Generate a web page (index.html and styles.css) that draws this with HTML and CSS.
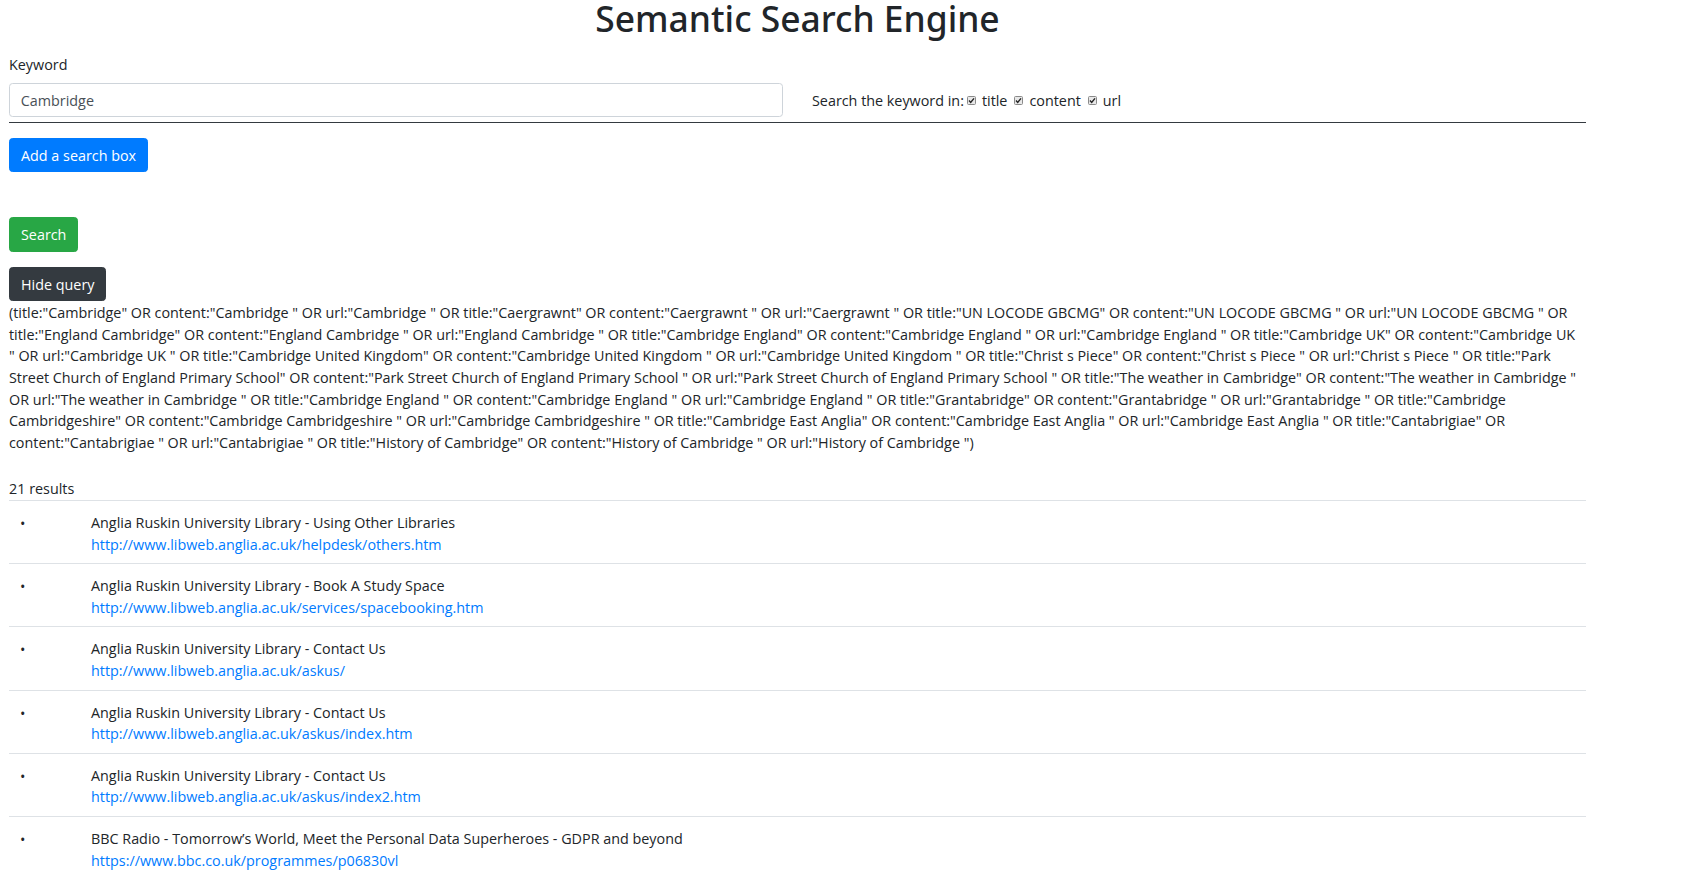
FILE: index.html
```html
<!DOCTYPE html>
<html lang="en">
<head>
<meta charset="utf-8">
<title>Semantic Search Engine</title>
<link rel="stylesheet" href="styles.css">
</head>
<body>
<div class="container">
  <h1 class="title">Semantic Search Engine</h1>

  <form class="search-form">
    <label class="field-label" for="kw">Keyword</label>
    <div class="keyword-row">
      <input id="kw" class="text-input" type="text" value="Cambridge">
      <div class="fields">
        <span class="fields-lead">Search the keyword in:</span>
        <span class="opt">
          <svg class="cb" width="9" height="9" viewBox="0 0 9 9"><rect x="0.5" y="0.5" width="8" height="8" rx="1" fill="#e8e8e8" stroke="#8a8a8a"/><path d="M2 4.6 L3.7 6.4 L7 2.4" fill="none" stroke="#222" stroke-width="1.4"/></svg>
          <span>title</span>
        </span>
        <span class="opt">
          <svg class="cb" width="9" height="9" viewBox="0 0 9 9"><rect x="0.5" y="0.5" width="8" height="8" rx="1" fill="#e8e8e8" stroke="#8a8a8a"/><path d="M2 4.6 L3.7 6.4 L7 2.4" fill="none" stroke="#222" stroke-width="1.4"/></svg>
          <span>content</span>
        </span>
        <span class="opt">
          <svg class="cb" width="9" height="9" viewBox="0 0 9 9"><rect x="0.5" y="0.5" width="8" height="8" rx="1" fill="#e8e8e8" stroke="#8a8a8a"/><path d="M2 4.6 L3.7 6.4 L7 2.4" fill="none" stroke="#222" stroke-width="1.4"/></svg>
          <span>url</span>
        </span>
      </div>
    </div>
    <hr class="rule">
    <button type="button" class="btn btn-blue">Add a search box</button>
    <button type="button" class="btn btn-green">Search</button>
  </form>

  <button type="button" class="btn btn-dark">Hide query</button>
  <p class="query">(title:"Cambridge" OR content:"Cambridge " OR url:"Cambridge " OR title:"Caergrawnt" OR content:"Caergrawnt " OR url:"Caergrawnt " OR title:"UN LOCODE GBCMG" OR content:"UN LOCODE GBCMG " OR url:"UN LOCODE GBCMG " OR<br>title:"England Cambridge" OR content:"England Cambridge " OR url:"England Cambridge " OR title:"Cambridge England" OR content:"Cambridge England " OR url:"Cambridge England " OR title:"Cambridge UK" OR content:"Cambridge UK<br>" OR url:"Cambridge UK " OR title:"Cambridge United Kingdom" OR content:"Cambridge United Kingdom " OR url:"Cambridge United Kingdom " OR title:"Christ s Piece" OR content:"Christ s Piece " OR url:"Christ s Piece " OR title:"Park<br>Street Church of England Primary School" OR content:"Park Street Church of England Primary School " OR url:"Park Street Church of England Primary School " OR title:"The weather in Cambridge" OR content:"The weather in Cambridge "<br>OR url:"The weather in Cambridge " OR title:"Cambridge England " OR content:"Cambridge England " OR url:"Cambridge England " OR title:"Grantabridge" OR content:"Grantabridge " OR url:"Grantabridge " OR title:"Cambridge<br>Cambridgeshire" OR content:"Cambridge Cambridgeshire " OR url:"Cambridge Cambridgeshire " OR title:"Cambridge East Anglia" OR content:"Cambridge East Anglia " OR url:"Cambridge East Anglia " OR title:"Cantabrigiae" OR<br>content:"Cantabrigiae " OR url:"Cantabrigiae " OR title:"History of Cambridge" OR content:"History of Cambridge " OR url:"History of Cambridge ")</p>

  <div class="count">21 results</div>
  <ul class="results">
    <li class="result"><span class="dot">•</span><div class="result-body"><div class="result-title">Anglia Ruskin University Library - Using Other Libraries</div><a class="result-link" href="#">http://www.libweb.anglia.ac.uk/helpdesk/others.htm</a></div></li>
    <li class="result"><span class="dot">•</span><div class="result-body"><div class="result-title">Anglia Ruskin University Library - Book A Study Space</div><a class="result-link" href="#">http://www.libweb.anglia.ac.uk/services/spacebooking.htm</a></div></li>
    <li class="result"><span class="dot">•</span><div class="result-body"><div class="result-title">Anglia Ruskin University Library - Contact Us</div><a class="result-link" href="#">http://www.libweb.anglia.ac.uk/askus/</a></div></li>
    <li class="result"><span class="dot">•</span><div class="result-body"><div class="result-title">Anglia Ruskin University Library - Contact Us</div><a class="result-link" href="#">http://www.libweb.anglia.ac.uk/askus/index.htm</a></div></li>
    <li class="result"><span class="dot">•</span><div class="result-body"><div class="result-title">Anglia Ruskin University Library - Contact Us</div><a class="result-link" href="#">http://www.libweb.anglia.ac.uk/askus/index2.htm</a></div></li>
    <li class="result"><span class="dot">•</span><div class="result-body"><div class="result-title">BBC Radio - Tomorrow’s World, Meet the Personal Data Superheroes - GDPR and beyond</div><a class="result-link" href="#">https://www.bbc.co.uk/programmes/p06830vl</a></div></li>
  </ul>
</div>
</body>
</html>
```
FILE: styles.css
```css
* { box-sizing: border-box; }

html, body {
  margin: 0;
  padding: 0;
  background: #fff;
}

body {
  font-family: "Open Sans", "Noto Sans", sans-serif;
  font-size: 14.35px;
  line-height: 21.6px;
  color: #212529;
  overflow: hidden;
}

.container {
  width: 1577px;
  margin-left: 9px;
}

.title {
  font-family: "Noto Sans", "Open Sans", sans-serif;
  font-weight: 500;
  font-size: 35.4px;
  line-height: 36px;
  text-align: center;
  margin: 0 0 18.2px;
  color: #212529;
}

.search-form {
  margin: 0;
}

.field-label {
  display: block;
  margin-bottom: 7.2px;
}

.keyword-row {
  display: flex;
  align-items: center;
  height: 34px;
}

.text-input {
  width: 774px;
  height: 34px;
  flex: none;
  padding: 1px 10.8px 0;
  border: 1px solid #ced4da;
  border-radius: 3.6px;
  font-family: "Open Sans", sans-serif;
  font-size: 14.35px;
  color: #495057;
  background: #fff;
  outline: none;
}

.fields {
  display: flex;
  align-items: center;
  margin-left: 29px;
  padding-top: 1px;
}

.fields-lead {
  margin-right: 3px;
}

.opt {
  display: inline-flex;
  align-items: center;
  margin-right: 7px;
}

.cb {
  display: block;
  margin-right: 6px;
  flex: none;
}

.rule {
  border: 0;
  border-top: 1px solid #343a40;
  margin: 5px 0 15px;
  height: 0;
}

.btn {
  display: block;
  font-family: "Open Sans", sans-serif;
  font-size: 14.35px;
  line-height: 21.6px;
  padding: 6.2px 11px 4.6px;
  border: 1px solid transparent;
  border-radius: 3.6px;
  color: #fff;
  cursor: pointer;
}

.btn-blue {
  background: #007bff;
  border-color: #007bff;
  margin-bottom: 44.9px;
}

.btn-green {
  background: #28a745;
  border-color: #28a745;
  margin-bottom: 15.3px;
}

.btn-dark {
  background: #343a40;
  border-color: #343a40;
}

.query {
  margin: 1px 0 25px;
  white-space: nowrap;
}

.count {
  line-height: 21.6px;
}

.results {
  list-style: none;
  margin: 0;
  padding: 0;
}

.result {
  display: grid;
  grid-template-columns: 82px 1fr;
  border-top: 1px solid #dee2e6;
  padding: 11px 0 8px;
}

.dot {
  padding-left: 11px;
  font-size: 14.35px;
  line-height: 23px;
}

.result-link {
  color: #007bff;
  text-decoration: none;
}
```
